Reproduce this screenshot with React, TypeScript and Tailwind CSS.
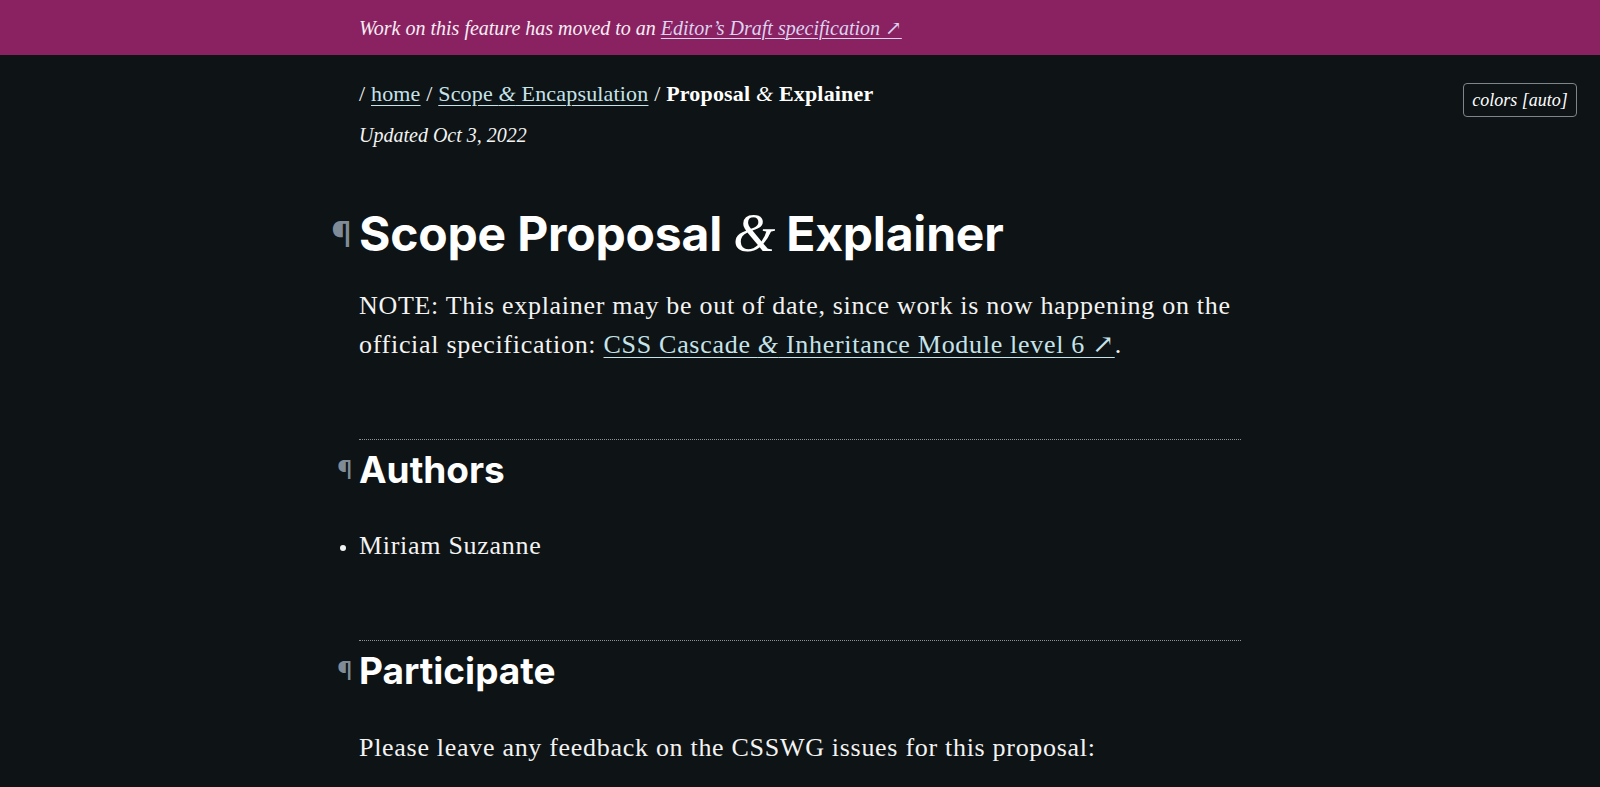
import React from "react";

const serif = "font-['Liberation_Serif','DejaVu_Serif',serif]";
const sans = "font-['Inter','Liberation_Sans',sans-serif]";

function Amp({ className = "" }: { className?: string }) {
  return (
    <span className={`${serif} italic font-normal ${className}`}>&amp;</span>
  );
}

function Heading({
  level,
  children,
  className = "",
}: {
  level: 1 | 2;
  children: React.ReactNode;
  className?: string;
}) {
  const Tag = level === 1 ? "h1" : "h2";
  return (
    <Tag className={`relative ${sans} font-bold text-white leading-[1.2] ${className}`}>
      <a
        href="#"
        aria-hidden="true"
        className={`absolute top-1/2 -translate-y-1/2 text-[#7f8c98] font-normal ${
          level === 1 ? "-left-[28px] text-[35px]" : "-left-[22px] text-[26px]"
        }`}
      >
        ¶
      </a>
      {children}
    </Tag>
  );
}

export default function App() {
  return (
    <div className={`min-h-screen bg-[#0e1315] text-[#f3f3f3] ${serif} relative`}>
      <div className="h-[55px] bg-[#8a2262] flex items-center">
        <p className="w-[882px] mx-auto text-[20px] italic text-[#f7eef4] leading-none">
          Work on this feature has moved to an{" "}
          <a href="#" className="text-[#d9d4f0] underline underline-offset-[3px] decoration-1">
            Editor’s Draft specification ↗
          </a>
        </p>
      </div>

      <button className="absolute right-[23px] top-[83px] h-[34px] w-[114px] rounded-[4px] border border-[#7d868c] text-[18px] italic text-white leading-none">
        colors [auto]
      </button>

      <main className="w-[882px] mx-auto pb-10">
        <nav className="mt-[23px] text-[22px] leading-[32px] tracking-[0.008em]">
          /{" "}
          <a href="#" className="text-[#c6e3ea] underline underline-offset-[4px] decoration-1">
            home
          </a>{" "}
          /{" "}
          <a href="#" className="text-[#c6e3ea] underline underline-offset-[4px] decoration-1">
            Scope <Amp /> Encapsulation
          </a>{" "}
          / <strong className="font-bold text-white">Proposal <Amp /> Explainer</strong>
        </nav>
        <p className="mt-[9px] text-[20px] leading-[32px] italic">Updated Oct 3, 2022</p>

        <Heading level={1} className="mt-[54px] text-[48px] tracking-[-0.004em]">
          Scope Proposal <Amp className="text-[54px] leading-none" /> Explainer
        </Heading>

        <p className="mt-[23px] text-[26px] leading-[39px] tracking-[0.027em]">
          NOTE: This explainer may be out of date, since work is now happening on the
          official specification:{" "}
          <a href="#" className="text-[#c6e3ea] underline underline-offset-[4px] decoration-1">
            CSS Cascade <Amp /> Inheritance Module level 6 ↗
          </a>
          .
        </p>

        <hr className="mt-[75px] border-0 border-t border-dotted border-[#8a9499]" />
        <Heading level={2} className="mt-[8px] text-[37px]">
          Authors
        </Heading>
        <ul className="mt-[34px] list-disc text-[26px] leading-[39px] tracking-[0.027em] marker:text-[20px]">
          <li>Miriam Suzanne</li>
        </ul>

        <hr className="mt-[75px] border-0 border-t border-dotted border-[#8a9499]" />
        <Heading level={2} className="mt-[8px] text-[37px]">
          Participate
        </Heading>
        <p className="mt-[35px] text-[26px] leading-[39px] tracking-[0.027em]">
          Please leave any feedback on the CSSWG issues for this proposal:
        </p>
      </main>
    </div>
  );
}
